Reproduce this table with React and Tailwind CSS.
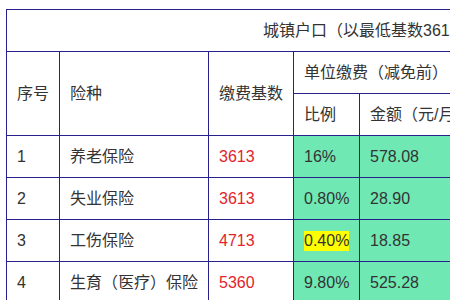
const rows = [
  { no: '1', name: '养老保险', base: '3613', rate: '16%', amount: '578.08' },
  { no: '2', name: '失业保险', base: '3613', rate: '0.80%', amount: '28.90' },
  { no: '3', name: '工伤保险', base: '4713', rate: '0.40%', amount: '18.85', mark: true },
  { no: '4', name: '生育（医疗）保险', base: '5360', rate: '9.80%', amount: '525.28' },
];

const cell = 'flex items-center px-[10px] border-r border-b border-[#27208a] h-[42px] whitespace-nowrap';

const App = () => {
  return (
    <div
      className="w-[450px] h-[300px] overflow-hidden bg-white text-[16px] text-[#333]"
      style={{ fontFamily: '"Liberation Sans", "Noto Sans CJK TC", "Noto Sans CJK SC", sans-serif' }}
    >
      <div className="ml-[6px] mt-[9px] w-[760px] grid grid-cols-[53px_149px_85px_66px_130px_80px_130px] border-l border-t border-[#27208a]">
        <div className={`${cell} col-span-7 pl-[256px]`}>城镇户口（以最低基数3613元为例）</div>

        <div className={`${cell} row-span-2 h-[84px]`}>序号</div>
        <div className={`${cell} row-span-2 h-[84px]`}>险种</div>
        <div className={`${cell} row-span-2 h-[84px]`}>缴费基数</div>
        <div className={`${cell} col-span-2`}>单位缴费（减免前）</div>
        <div className={`${cell} col-span-2`}>个人缴费</div>
        <div className={cell}>比例</div>
        <div className={cell}>金额（元/月）</div>
        <div className={cell}>比例</div>
        <div className={cell}>金额（元/月）</div>

        {rows.map((r) => (
          <div key={r.no} className="contents">
            <div className={cell}>{r.no}</div>
            <div className={cell}>{r.name}</div>
            <div className={`${cell} text-[#e3242b]`}>{r.base}</div>
            <div className={`${cell} bg-[#6fe8b3]`}>
              <span className={r.mark ? 'bg-[#ffff00] leading-[20px]' : ''}>{r.rate}</span>
            </div>
            <div className={`${cell} bg-[#6fe8b3]`}>{r.amount}</div>
            <div className={cell}></div>
            <div className={cell}></div>
          </div>
        ))}
      </div>
    </div>
  );
};

export default App;
